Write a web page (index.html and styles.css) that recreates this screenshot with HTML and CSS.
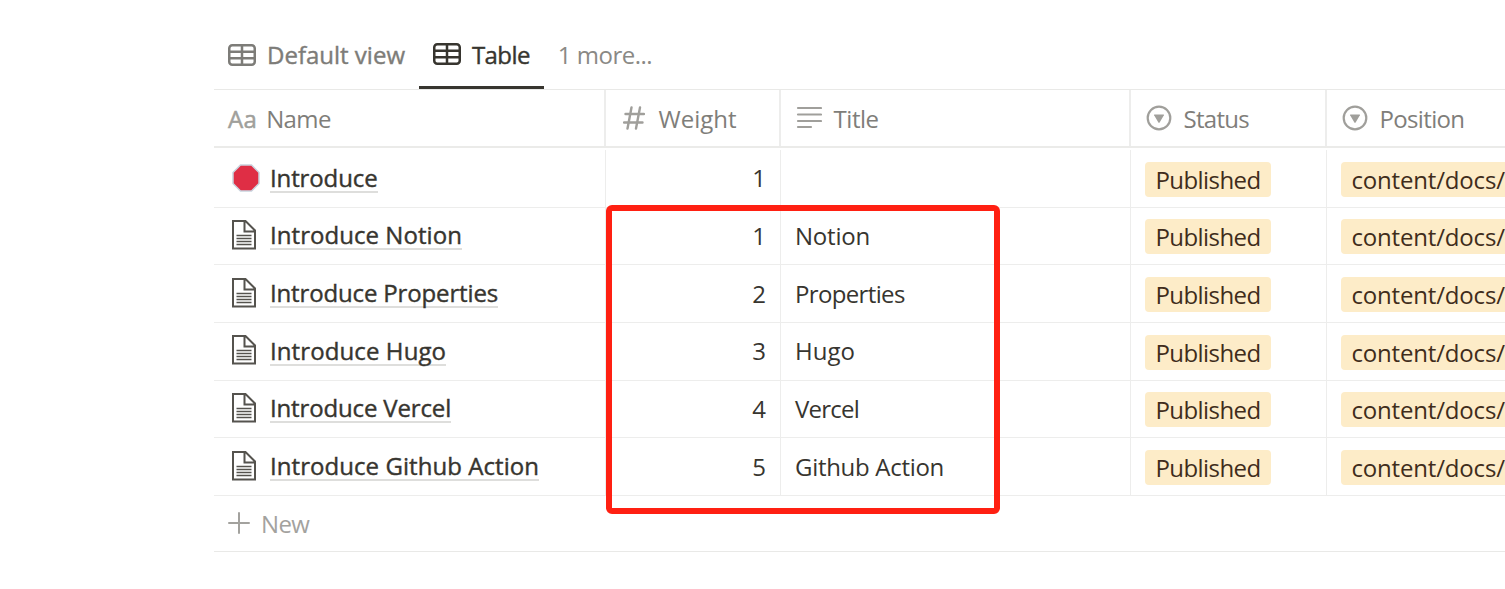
FILE: index.html
```html
<!DOCTYPE html>
<html lang="en">
<head>
<meta charset="utf-8">
<title>Table</title>
<link rel="stylesheet" href="styles.css">
</head>
<body>
<svg width="0" height="0" class="defs" aria-hidden="true">
  <symbol id="grid" viewBox="0 0 28 22"><g fill="none" stroke="currentColor" stroke-width="2.500"><rect x="1.250" y="1.250" width="25.500" height="19.500" rx="3"/><path d="M1 7.700h26M1 14.300h26M14 1v20"/></g></symbol>
  <symbol id="page" viewBox="0 0 24 30"><path d="M1 1h12.500l9.500 9.500V28.500H1zM12.500 1v10.500H23" fill="none" stroke="currentColor" stroke-width="2"/><path d="M4.500 15.500h15M4.500 18.500h15M4.500 21.500h15M4.500 24.500h15" stroke="currentColor" stroke-width="1.600"/></symbol>
  <symbol id="select" viewBox="0 0 26 26"><circle cx="13" cy="13" r="11.300" fill="none" stroke="currentColor" stroke-width="2.200"/><path d="M8.500 9.500h9q.8 0 .4.700l-4.300 7.300q-.6.800-1.200 0L8.100 10.200q-.4-.7.400-.7z" fill="currentColor"/></symbol>
</svg>
<div class="database">
  <nav class="tabs">
    <div class="tab"><svg class="grid-icon"><use href="#grid"/></svg><span>Default view</span></div>
    <div class="tab active"><svg class="grid-icon"><use href="#grid"/></svg><span class="t-table">Table</span></div>
    <div class="more"><span>1 more...</span></div>
  </nav>
  <div class="row head">
    <div class="cell"><span class="aa">Aa</span><span class="h-name">Name</span></div>
    <div class="cell"><svg class="hash" viewBox="0 0 22 24"><path d="M8.500 1.500L4.500 22.500M17 1.500L13 22.500M2.500 8h18.500M1 16.500h18.500" fill="none" stroke="currentColor" stroke-width="2.400" stroke-linecap="round"/></svg><span class="h-weight">Weight</span></div>
    <div class="cell"><svg class="lines" viewBox="0 0 26 24"><path d="M2 2h23M2 8.500h23M2 15h23M2 21h13" stroke="currentColor" stroke-width="2.200" stroke-linecap="round"/></svg><span class="h-title">Title</span></div>
    <div class="cell"><svg class="select"><use href="#select"/></svg><span class="h-status">Status</span></div>
    <div class="cell"><svg class="select"><use href="#select"/></svg><span class="h-position">Position</span></div>
  </div>
  <div class="rows">
    <div class="row"><div class="cell name"><svg class="stop" viewBox="0 0 28 28"><path d="M8.500 1h11L27 8.500v11L19.500 27h-11L1 19.500v-11z" fill="#df2e45" stroke="#c9d3de" stroke-width="1.500"/></svg><a class="n1">Introduce</a></div><div class="cell num"><span>1</span></div><div class="cell"></div><div class="cell"><span class="tag">Published</span></div><div class="cell"><span class="tag path">content/docs/</span></div></div>
    <div class="row"><div class="cell name"><svg class="page"><use href="#page"/></svg><a class="n2">Introduce Notion</a></div><div class="cell num"><span>1</span></div><div class="cell"><span class="v2">Notion</span></div><div class="cell"><span class="tag">Published</span></div><div class="cell"><span class="tag path">content/docs/</span></div></div>
    <div class="row"><div class="cell name"><svg class="page"><use href="#page"/></svg><a class="n3">Introduce Properties</a></div><div class="cell num"><span>2</span></div><div class="cell"><span class="v3">Properties</span></div><div class="cell"><span class="tag">Published</span></div><div class="cell"><span class="tag path">content/docs/</span></div></div>
    <div class="row"><div class="cell name"><svg class="page"><use href="#page"/></svg><a class="n4">Introduce Hugo</a></div><div class="cell num"><span>3</span></div><div class="cell"><span>Hugo</span></div><div class="cell"><span class="tag">Published</span></div><div class="cell"><span class="tag path">content/docs/</span></div></div>
    <div class="row"><div class="cell name"><svg class="page"><use href="#page"/></svg><a class="n5">Introduce Vercel</a></div><div class="cell num"><span>4</span></div><div class="cell"><span class="v5">Vercel</span></div><div class="cell"><span class="tag">Published</span></div><div class="cell"><span class="tag path">content/docs/</span></div></div>
    <div class="row"><div class="cell name"><svg class="page"><use href="#page"/></svg><a class="n6">Introduce Github Action</a></div><div class="cell num"><span>5</span></div><div class="cell"><span class="v6">Github Action</span></div><div class="cell"><span class="tag">Published</span></div><div class="cell"><span class="tag path">content/docs/</span></div></div>
  </div>
  <div class="new"><svg class="plus" viewBox="0 0 22 22"><path d="M11 1v20M1 11h20" stroke="currentColor" stroke-width="2" stroke-linecap="round"/></svg><span>New</span></div>
  <div class="highlight"></div>
</div>
</body>
</html>
```
FILE: styles.css
```css
* { box-sizing: border-box; }
body { margin: 0; background: #fff; color: #37352f; font: 400 24px/34px "Open Sans", "Noto Sans", sans-serif; overflow: hidden; }
.defs { position: absolute; }
svg { flex: none; display: block; }
span, a { white-space: nowrap; }
.database { position: relative; width: 1291px; margin-left: 214px; overflow: hidden; }
.tabs { display: flex; height: 90px; padding-top: 22px; border-bottom: 1px solid #e9e9e7; }
.tab { display: flex; height: 67px; padding: 0 14px 2px; align-items: center; gap: 11px; color: #7d7c78; -webkit-text-stroke: .4px currentColor; }
.tab.active { padding: 0 14px; color: #37352f; border-bottom: 3px solid #37352f; }
.tab.active span { padding-top: 2px; }
.t-table { letter-spacing: -.6px; }
.grid-icon { width: 28px; height: 22px; }
.more { padding: 16px 14px; color: #8a8985; letter-spacing: -.5px; }
.row { display: grid; grid-template-columns: 391px 175px 350px 196px 179px; }
.cell { display: flex; align-items: center; padding-left: 14px; min-width: 0; overflow: hidden; }
.head { height: 58px; border-bottom: 2px solid #ebebe9; color: #7f7e7a; grid-template-columns: 390px 175px 350px 196px 180px; }
.head .cell + .cell { border-left: 2px solid #ededec; padding-left: 15px; }
.head .cell:first-child { padding-left: 14px; }
.head span { padding-top: 2px; }
.h-name { letter-spacing: -.6px; }
.h-title { letter-spacing: -.45px; }
.h-status { letter-spacing: -.7px; }
.h-position { letter-spacing: -.65px; }
.rows { padding-top: 2px; }
.rows .row { height: 57.660px; border-bottom: 1px solid #ededec; }
.rows .cell + .cell { border-left: 1px solid #ededec; }
.tag { height: 35px; margin-top: 2px; padding: 1px 10px 0 10.500px; border-radius: 4px; background: #fdecc8; color: #402c1b; letter-spacing: -.58px; }
.tag.path { letter-spacing: -.18px; }
.num { justify-content: flex-end; padding-right: 14px; }
.name { padding-left: 18px; }
.name a { -webkit-text-stroke: .4px currentColor; border-bottom: 2px solid #dededc; line-height: 26px; margin: 1px 0 0 14px; }
.n1 { letter-spacing: -.12px; }
.n2 { letter-spacing: .05px; }
.n3 { letter-spacing: -.15px; }
.n4 { letter-spacing: .1px; }
.n5 { letter-spacing: -.15px; }
.n6 { letter-spacing: .06px; }
.v2 { letter-spacing: -.2px; }
.v3 { letter-spacing: -.65px; }
.v5 { letter-spacing: -.75px; }
.v6 { letter-spacing: -.3px; }
.page { width: 24px; height: 30px; margin-bottom: 2px; color: #55534e; }
.name .stop { width: 28px; height: 28px; margin-right: -4px; }
.name .stop + a { margin-left: 14px; }
.name .stop { margin-left: -.5px; margin-right: -3.500px; }
.hash { width: 22px; height: 24px; }
.lines, .select { width: 26px; height: 26px; }
.head svg, .aa { color: #a09f9b; margin-right: 11px; }
.head svg + span { margin-left: .5px; }
.head .hash { margin: 0 13px 0 2px; }
.aa { -webkit-text-stroke: .5px currentColor; margin-right: 9px; letter-spacing: .3px; }
.new { display: flex; align-items: center; height: 56px; padding-left: 14px; gap: 11px; color: #a3a29e; border-bottom: 1px solid #e9e9e7; letter-spacing: -.6px; }
.new span { padding-top: 2px; }
.plus { width: 22px; height: 22px; }
.highlight { position: absolute; left: 392px; top: 205px; width: 394px; height: 309px; border: 6px solid #ff2012; border-radius: 6px; }
```
